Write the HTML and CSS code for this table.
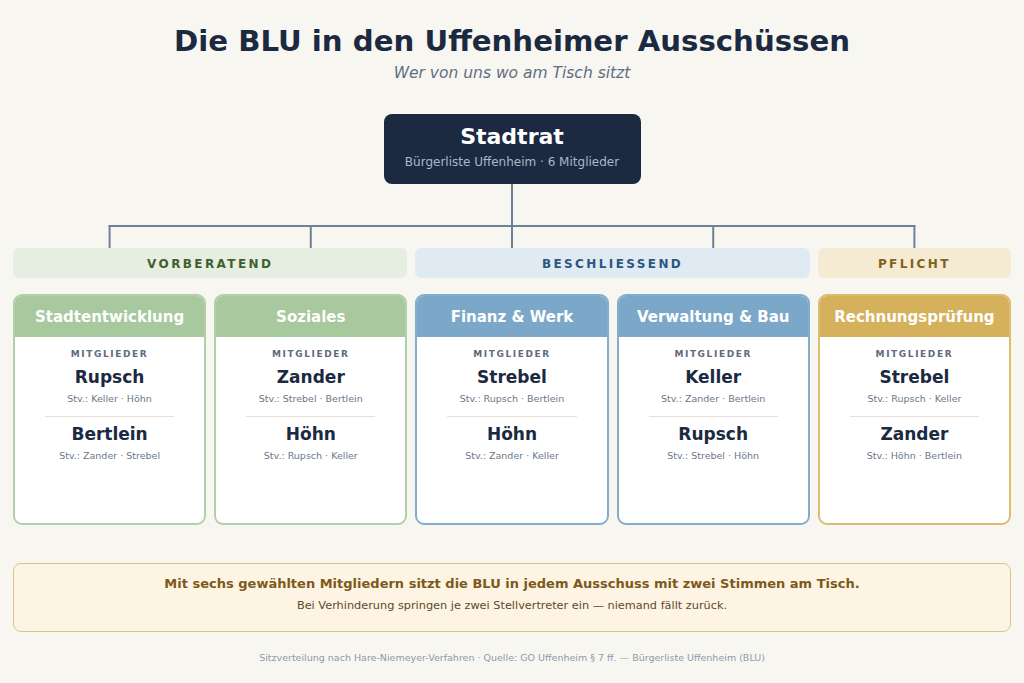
FILE: index.html
```html
<!DOCTYPE html>
<html lang="de">
<head>
<meta charset="utf-8">
<title>Die BLU in den Uffenheimer Ausschüssen</title>
<link rel="stylesheet" href="styles.css">
</head>
<body>
<div class="page">
  <header class="head">
    <h1 class="title">Die BLU in den Uffenheimer Ausschüssen</h1>
    <p class="subtitle">Wer von uns wo am Tisch sitzt</p>
  </header>

  <div class="root-wrap">
    <div class="root">
      <div class="root-title">Stadtrat</div>
      <div class="root-sub">Bürgerliste Uffenheim · 6 Mitglieder</div>
    </div>
  </div>

  <svg class="connector" viewBox="0 0 998 64" preserveAspectRatio="none" aria-hidden="true">
    <g stroke="#6f8196" stroke-width="2" fill="none">
      <line x1="499" y1="0" x2="499" y2="42"/>
      <line x1="95.6" y1="42" x2="902.4" y2="42"/>
      <line x1="96.6" y1="41" x2="96.6" y2="64"/>
      <line x1="297.8" y1="41" x2="297.8" y2="64"/>
      <line x1="499" y1="41" x2="499" y2="64"/>
      <line x1="700.2" y1="41" x2="700.2" y2="64"/>
      <line x1="901.4" y1="41" x2="901.4" y2="64"/>
    </g>
  </svg>

  <div class="grid bands">
    <div class="band band-green span2">VORBERATEND</div>
    <div class="band band-blue span2">BESCHLIESSEND</div>
    <div class="band band-gold">PFLICHT</div>
  </div>

  <div class="grid cards">
    <section class="card card-green">
      <div class="card-head">Stadtentwicklung</div>
      <div class="card-body">
        <div class="label">MITGLIEDER</div>
        <div class="name">Rupsch</div>
        <div class="stv">Stv.: Keller · Höhn</div>
        <div class="divider"></div>
        <div class="name">Bertlein</div>
        <div class="stv">Stv.: Zander · Strebel</div>
      </div>
    </section>
    <section class="card card-green">
      <div class="card-head">Soziales</div>
      <div class="card-body">
        <div class="label">MITGLIEDER</div>
        <div class="name">Zander</div>
        <div class="stv">Stv.: Strebel · Bertlein</div>
        <div class="divider"></div>
        <div class="name">Höhn</div>
        <div class="stv">Stv.: Rupsch · Keller</div>
      </div>
    </section>
    <section class="card card-blue">
      <div class="card-head">Finanz &amp; Werk</div>
      <div class="card-body">
        <div class="label">MITGLIEDER</div>
        <div class="name">Strebel</div>
        <div class="stv">Stv.: Rupsch · Bertlein</div>
        <div class="divider"></div>
        <div class="name">Höhn</div>
        <div class="stv">Stv.: Zander · Keller</div>
      </div>
    </section>
    <section class="card card-blue">
      <div class="card-head">Verwaltung &amp; Bau</div>
      <div class="card-body">
        <div class="label">MITGLIEDER</div>
        <div class="name">Keller</div>
        <div class="stv">Stv.: Zander · Bertlein</div>
        <div class="divider"></div>
        <div class="name">Rupsch</div>
        <div class="stv">Stv.: Strebel · Höhn</div>
      </div>
    </section>
    <section class="card card-gold">
      <div class="card-head">Rechnungsprüfung</div>
      <div class="card-body">
        <div class="label">MITGLIEDER</div>
        <div class="name">Strebel</div>
        <div class="stv">Stv.: Rupsch · Keller</div>
        <div class="divider"></div>
        <div class="name">Zander</div>
        <div class="stv">Stv.: Höhn · Bertlein</div>
      </div>
    </section>
  </div>

  <div class="note">
    <p class="note-main">Mit sechs gewählten Mitgliedern sitzt die BLU in jedem Ausschuss mit zwei Stimmen am Tisch.</p>
    <p class="note-sub">Bei Verhinderung springen je zwei Stellvertreter ein — niemand fällt zurück.</p>
  </div>

  <footer class="foot">Sitzverteilung nach Hare-Niemeyer-Verfahren · Quelle: GO Uffenheim § 7 ff. — Bürgerliste Uffenheim (BLU)</footer>
</div>
</body>
</html>
```

FILE: styles.css
```css
* { box-sizing: border-box; }

html, body {
  margin: 0;
  padding: 0;
  background: #f8f6f1;
  font-family: "DejaVu Sans", "Noto Sans", sans-serif;
  color: #1b2a41;
}

.page {
  padding: 0 13px;
}

.head {
  text-align: center;
  padding-top: 24px;
}

.title {
  margin: 0;
  font-size: 29.2px;
  line-height: 34px;
  font-weight: 700;
  color: #1b2a41;
}

.subtitle {
  margin: 6px 0 0;
  font-size: 15.5px;
  line-height: 18px;
  font-style: italic;
  color: #5f6e82;
}

.root-wrap {
  display: flex;
  justify-content: center;
  margin-top: 32px;
}

.root {
  width: 257px;
  height: 70px;
  background: #1b2a41;
  border-radius: 8px;
  text-align: center;
  padding-top: 10px;
}

.root-title {
  color: #ffffff;
  font-size: 22px;
  font-weight: 700;
  line-height: 26px;
}

.root-sub {
  margin-top: 4px;
  color: #a8b7ca;
  font-size: 12px;
  line-height: 16px;
}

.connector {
  display: block;
  width: 100%;
  height: 64px;
}

.grid {
  display: grid;
  grid-template-columns: repeat(5, 1fr);
  gap: 8px;
}

.span2 { grid-column: span 2; }

.band {
  height: 30px;
  border-radius: 6px;
  display: flex;
  align-items: center;
  justify-content: center;
  padding-top: 2px;
  font-size: 12px;
  font-weight: 700;
  letter-spacing: 2.4px;
}

.band-green { background: #e5eee0; color: #3e5f30; }
.band-blue { background: #e0eaf3; color: #2b5680; }
.band-gold { background: #f5ebd3; color: #80621c; }

.cards {
  margin-top: 16px;
}

.card {
  height: 231px;
  border: 2px solid;
  border-radius: 9px;
  background: #ffffff;
  overflow: hidden;
}

.card-head {
  height: 41px;
  display: flex;
  align-items: center;
  justify-content: center;
  color: #ffffff;
  font-size: 15px;
  font-weight: 700;
}

.card-green { border-color: #b3cfa9; }
.card-green .card-head { background: #a8c89d; }
.card-blue { border-color: #84adcb; }
.card-blue .card-head { background: #7ba8c8; }
.card-gold { border-color: #dbbd72; }
.card-gold .card-head { background: #d5b15c; }

.card-body {
  padding-top: 11px;
  text-align: center;
}

.label {
  font-size: 9px;
  line-height: 12px;
  font-weight: 700;
  letter-spacing: 1.6px;
  color: #5f6b7c;
}

.name {
  margin-top: 6px;
  font-size: 17px;
  line-height: 22px;
  font-weight: 700;
  color: #1b2a41;
}

.stv {
  margin-top: 4px;
  font-size: 9.5px;
  line-height: 14px;
  color: #6b7789;
}

.divider {
  height: 1px;
  background: #ebdfd5;
  margin: 10px 30px 0;
}

.note {
  margin-top: 38px;
  height: 69px;
  border: 1.5px solid #dcc189;
  border-radius: 8px;
  background: #fdf4e3;
  text-align: center;
  padding-top: 11px;
}

.note-main {
  margin: 0;
  font-size: 13px;
  line-height: 18px;
  font-weight: 700;
  color: #7c5a1c;
}

.note-sub {
  margin: 5px 0 0;
  font-size: 11.3px;
  line-height: 16px;
  color: #5e4a2a;
}

.foot {
  margin-top: 19px;
  text-align: center;
  font-size: 9.5px;
  line-height: 14px;
  color: #8e9aab;
}
```
